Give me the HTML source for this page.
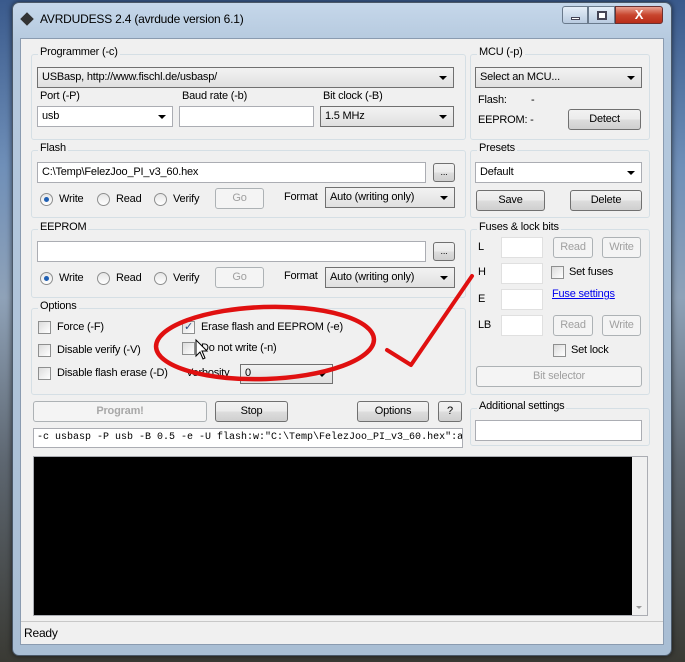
<!DOCTYPE html>
<html><head><meta charset="utf-8"><style>
*{box-sizing:border-box;margin:0;padding:0}
body{width:685px;height:662px;overflow:hidden;position:relative;font-family:"Liberation Sans",sans-serif;font-size:11px;letter-spacing:-0.2px;color:#000;
background:linear-gradient(180deg,#3a5a8c 0%,#6f8fb8 25%,#8fa2b8 45%,#5d6670 70%,#3a3a34 100%)}
.a{position:absolute}
.win{left:12px;top:2px;width:660px;height:654px;border-radius:7px;background:linear-gradient(180deg,#c5d7ea 0,#b5c9de 40px,#a9bed4 100%);border:1px solid #4a5868;box-shadow:0 0 6px rgba(0,0,0,.6)}
.client{left:20px;top:38px;width:644px;height:607px;background:#f0f0f0;border:1px solid #8a9bb0}
.gb{position:absolute;border:1px solid #d5dfe5;border-radius:3px}
.gl{position:absolute;background:#f0f0f0;padding:0 2px;top:-9px;left:6px}
.tb{position:absolute;background:#fff;border:1px solid #abadb3;height:21px;padding:3px 4px;white-space:nowrap;overflow:hidden}
.cb{position:absolute;background:#fff;border:1px solid #abadb3;height:21px;padding:3px 4px}
.cb:after{content:"";position:absolute;right:6px;top:8px;border-left:4px solid transparent;border-right:4px solid transparent;border-top:4px solid #000}
.cbg{background:linear-gradient(#f2f2f2,#e0e0e0);border-color:#707070}
.bt{position:absolute;height:21px;border:1px solid #707070;border-radius:3px;background:linear-gradient(#f2f2f2 0,#ebebeb 50%,#dddddd 51%,#cfcfcf 100%);text-align:center;line-height:19px}
.bd{border-color:#adb2b5;background:#f4f4f4;color:#a0a0a0}
.rb{position:absolute;width:13px;height:13px;border-radius:50%;border:1px solid #8e8f8f;background:linear-gradient(#e6e6e6,#fff)}
.rb.on:after{content:"";position:absolute;left:3px;top:3px;width:5px;height:5px;border-radius:50%;background:#1f5fb3}
.ck{position:absolute;width:13px;height:13px;border:1px solid #8e8f8f;background:linear-gradient(135deg,#dcdcdc,#fff)}
.t{position:absolute;white-space:nowrap}
</style></head><body>
<div class="a win"></div>
<div class="a" style="left:21px;top:13px;width:12px;height:12px;background:#333;transform:rotate(45deg) scale(.8)"></div>
<div class="t" style="left:40px;top:12px;font-size:12px">AVRDUDESS 2.4 (avrdude version 6.1)</div>
<div class="a" style="left:562px;top:6px;width:26px;height:18px;border:1px solid #6a7a8c;border-radius:3px 0 0 3px;background:linear-gradient(#e5eef8,#b9cbe0)"><div class="a" style="left:8px;top:10px;width:9px;height:3px;background:#fff;border:1px solid #445"></div></div>
<div class="a" style="left:588px;top:6px;width:27px;height:18px;border:1px solid #6a7a8c;background:linear-gradient(#e5eef8,#b9cbe0)"><div class="a" style="left:8px;top:4px;width:10px;height:9px;border:2px solid #445;background:#fff"></div></div>
<div class="a" style="left:615px;top:6px;width:48px;height:18px;border:1px solid #6a3030;border-radius:0 3px 3px 0;background:linear-gradient(#e8a090,#c8452e 50%,#b82c18);color:#fff;font-weight:bold;text-align:center;line-height:16px;font-size:13px">X</div>
<div class="a client"></div>

<div class="gb" style="left:31px;top:54px;width:435px;height:86px"><span class="gl">Programmer (-c)</span></div>
<div class="cb cbg" style="left:37px;top:67px;width:417px">USBasp, http://www.fischl.de/usbasp/</div>
<div class="t" style="left:40px;top:90px">Port (-P)</div>
<div class="t" style="left:182px;top:90px">Baud rate (-b)</div>
<div class="t" style="left:323px;top:90px">Bit clock (-B)</div>
<div class="cb" style="left:37px;top:106px;width:136px">usb</div>
<div class="tb" style="left:179px;top:106px;width:135px"></div>
<div class="cb cbg" style="left:320px;top:106px;width:134px">1.5 MHz</div>

<div class="gb" style="left:470px;top:54px;width:180px;height:86px"><span class="gl">MCU (-p)</span></div>
<div class="cb cbg" style="left:475px;top:67px;width:167px">Select an MCU...</div>
<div class="t" style="left:478px;top:94px">Flash:</div><div class="t" style="left:531px;top:94px">-</div>
<div class="t" style="left:478px;top:114px">EEPROM: -</div>
<div class="bt" style="left:568px;top:109px;width:73px">Detect</div>

<div class="gb" style="left:31px;top:150px;width:435px;height:68px"><span class="gl">Flash</span></div>
<div class="tb" style="left:37px;top:162px;width:389px">C:\Temp\FelezJoo_PI_v3_60.hex</div>
<div class="bt" style="left:433px;top:163px;width:22px;height:19px;line-height:17px;font-size:9px">...</div>
<div class="rb on" style="left:40px;top:193px"></div><div class="t" style="left:59px;top:193px">Write</div>
<div class="rb" style="left:97px;top:193px"></div><div class="t" style="left:116px;top:193px">Read</div>
<div class="rb" style="left:154px;top:193px"></div><div class="t" style="left:173px;top:193px">Verify</div>
<div class="bt bd" style="left:215px;top:188px;width:49px">Go</div>
<div class="t" style="left:284px;top:191px">Format</div>
<div class="cb cbg" style="left:325px;top:187px;width:130px">Auto (writing only)</div>

<div class="gb" style="left:470px;top:150px;width:180px;height:68px"><span class="gl">Presets</span></div>
<div class="cb" style="left:475px;top:162px;width:167px">Default</div>
<div class="bt" style="left:476px;top:190px;width:69px">Save</div>
<div class="bt" style="left:570px;top:190px;width:72px">Delete</div>

<div class="gb" style="left:31px;top:229px;width:435px;height:69px"><span class="gl">EEPROM</span></div>
<div class="tb" style="left:37px;top:241px;width:389px"></div>
<div class="bt" style="left:433px;top:242px;width:22px;height:19px;line-height:17px;font-size:9px">...</div>
<div class="rb on" style="left:40px;top:272px"></div><div class="t" style="left:59px;top:272px">Write</div>
<div class="rb" style="left:97px;top:272px"></div><div class="t" style="left:116px;top:272px">Read</div>
<div class="rb" style="left:154px;top:272px"></div><div class="t" style="left:173px;top:272px">Verify</div>
<div class="bt bd" style="left:215px;top:267px;width:49px">Go</div>
<div class="t" style="left:284px;top:270px">Format</div>
<div class="cb cbg" style="left:325px;top:267px;width:130px">Auto (writing only)</div>

<div class="gb" style="left:470px;top:229px;width:180px;height:166px"><span class="gl">Fuses &amp; lock bits</span></div>
<div class="t" style="left:478px;top:241px">L</div><div class="tb" style="left:501px;top:237px;width:42px;border-color:#e0e0e0"></div>
<div class="bt bd" style="left:553px;top:237px;width:40px">Read</div><div class="bt bd" style="left:602px;top:237px;width:39px">Write</div>
<div class="t" style="left:478px;top:266px">H</div><div class="tb" style="left:501px;top:263px;width:42px;border-color:#e0e0e0"></div>
<div class="ck" style="left:551px;top:266px"></div><div class="t" style="left:569px;top:266px">Set fuses</div>
<div class="t" style="left:478px;top:293px">E</div><div class="tb" style="left:501px;top:289px;width:42px;border-color:#e0e0e0"></div>
<div class="t" style="left:552px;top:288px;color:#0000ee;text-decoration:underline">Fuse settings</div>
<div class="t" style="left:478px;top:319px">LB</div><div class="tb" style="left:501px;top:315px;width:42px;border-color:#e0e0e0"></div>
<div class="bt bd" style="left:553px;top:315px;width:40px">Read</div><div class="bt bd" style="left:602px;top:315px;width:39px">Write</div>
<div class="ck" style="left:553px;top:344px"></div><div class="t" style="left:571px;top:344px">Set lock</div>
<div class="bt bd" style="left:476px;top:366px;width:166px">Bit selector</div>

<div class="gb" style="left:31px;top:308px;width:435px;height:87px"><span class="gl">Options</span></div>
<div class="ck" style="left:38px;top:321px"></div><div class="t" style="left:57px;top:321px">Force (-F)</div>
<div class="ck" style="left:38px;top:344px"></div><div class="t" style="left:57px;top:344px">Disable verify (-V)</div>
<div class="ck" style="left:38px;top:367px"></div><div class="t" style="left:57px;top:367px">Disable flash erase (-D)</div>
<div class="ck" style="left:182px;top:321px;color:#2a4a80;font-size:11px;line-height:11px;text-align:center">✓</div><div class="t" style="left:201px;top:321px">Erase flash and EEPROM (-e)</div>
<div class="ck" style="left:182px;top:342px"></div><div class="t" style="left:201px;top:342px">Do not write (-n)</div>
<div class="t" style="left:186px;top:367px">Verbosity</div>
<div class="cb cbg" style="left:240px;top:364px;width:93px;height:20px;padding-top:2px">0</div>

<div class="bt bd" style="left:33px;top:401px;width:174px;font-weight:bold;color:#a8a8a8">Program!</div>
<div class="bt" style="left:215px;top:401px;width:73px">Stop</div>
<div class="bt" style="left:357px;top:401px;width:72px">Options</div>
<div class="bt" style="left:438px;top:401px;width:24px">?</div>
<div class="gb" style="left:470px;top:408px;width:180px;height:38px"><span class="gl">Additional settings</span></div>
<div class="tb" style="left:475px;top:420px;width:167px"></div>
<div class="tb" style="left:33px;top:428px;width:430px;height:20px;font-family:'Liberation Mono',monospace;font-size:10px;letter-spacing:0;padding:3px 3px">-c usbasp -P usb -B 0.5 -e -U flash:w:"C:\Temp\FelezJoo_PI_v3_60.hex":a</div>

<div class="a" style="left:33px;top:456px;width:615px;height:160px;border:1px solid #abadb3;background:#000"></div>
<div class="a" style="left:632px;top:457px;width:15px;height:158px;background:#f0f0f0"></div>
<div class="a" style="left:636px;top:606px;border-left:3px solid transparent;border-right:3px solid transparent;border-top:3px solid #999"></div>
<div class="a" style="left:21px;top:621px;width:642px;height:1px;background:#c8c8c8"></div>
<div class="t" style="left:24px;top:626px;font-size:12px">Ready</div>

<svg class="a" style="left:0;top:0" width="685" height="662">
<ellipse cx="265" cy="343" rx="109" ry="36" fill="none" stroke="#e01010" stroke-width="4.5" transform="rotate(-2 265 343)"/>
<path d="M387 350 L411 365 L472 276" fill="none" stroke="#e01010" stroke-width="4" stroke-linecap="round" stroke-linejoin="round"/>
<path d="M196 340 L196 356 L200 352 L203 359 L205 358 L202 351 L207 351 Z" fill="#fff" stroke="#000" stroke-width="1"/>
</svg>
</body></html>
